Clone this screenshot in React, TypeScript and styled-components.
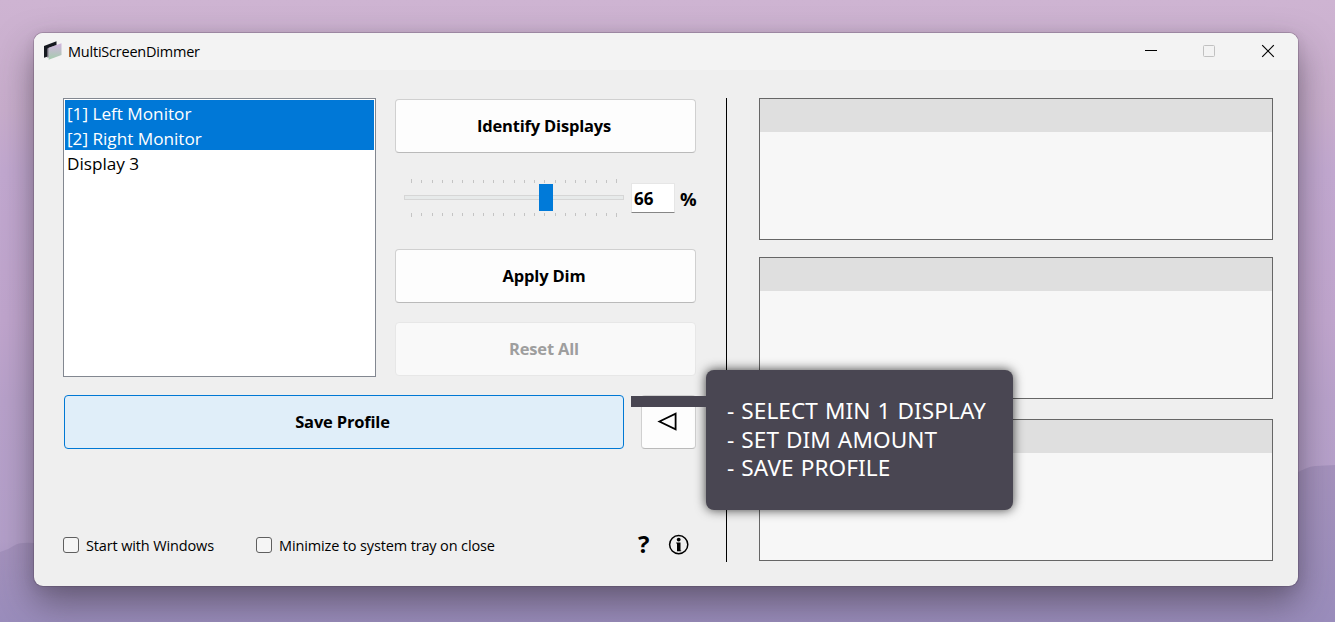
import React from "react";
import styled, { createGlobalStyle } from "styled-components";

const GlobalStyle = createGlobalStyle`
  * { box-sizing: border-box; }
  html, body { margin: 0; height: 100%; overflow: hidden; }
  body { font-family: "Open Sans", "Noto Sans", sans-serif; color: #000; }
  button, input { font-family: inherit; }
`;

const Desktop = styled.div`
  position: relative;
  width: 1335px;
  height: 622px;
  padding: 33px 37px 36px 34px;
  overflow: hidden;
  background: linear-gradient(180deg, #ceb4d2 0, #c9aecd 110px, #c3a9d1 170px, #c1a6ce 320px, #b9a2cb 400px, #b4a0ca 540px, #9b8cbb 622px);
`;

const Hills = styled.svg`
  position: absolute;
  left: 0;
  bottom: 0;
`;

const RightHill = styled(Hills)`
  left: 1275px;
`;

const Window = styled.main`
  position: relative;
  height: 553px;
  border-radius: 9px;
  background: #efefef;
  box-shadow: 0 0 0 1px rgba(70, 55, 75, 0.25), 0 17px 36px rgba(45, 40, 50, 0.5), 0 2px 12px rgba(50, 35, 60, 0.1);
`;

const TitleBar = styled.header`
  display: flex;
  align-items: center;
  height: 37px;
  padding: 0 23px 1px 9px;
  border-radius: 9px 9px 0 0;
  background: #f3f3f3;
`;

const Title = styled.h1`
  flex: 1;
  margin: 1px 0 0 6px;
  font-size: 14.5px;
  font-weight: 400;
  line-height: 20px;
  letter-spacing: -0.22px;
`;

const WindowControls = styled.div`
  display: flex;
  gap: 44px;
  svg { display: block; }
  svg:not(:last-child) { position: relative; left: -1px; }
`;

const Body = styled.div`
  display: grid;
  grid-template-columns: 633px 30px 1px 32px 514px;
  padding: 28px 0 0 29px;
`;

const Controls = styled.section`
  display: flex;
  flex-direction: column;
`;

const TopArea = styled.div`
  display: flex;
  gap: 19px;
  height: 279px;
`;

const DisplayList = styled.ul`
  width: 313px;
  margin: 0;
  padding: 1px;
  list-style: none;
  border: 1px solid #828790;
  background: #fff;
`;

const DisplayItem = styled.li<{ $selected?: boolean }>`
  height: 25px;
  padding-left: 2px;
  font-size: 17.2px;
  line-height: 27px;
  letter-spacing: -0.02px;
  color: ${(p) => (p.$selected ? "#fff" : "#000")};
  background: ${(p) => (p.$selected ? "#0078d7" : "transparent")};
`;

const Actions = styled.div`
  display: flex;
  flex-direction: column;
  width: 301px;
  padding-top: 1px;
`;

const Button = styled.button<{ $width?: number; $active?: boolean }>`
  display: flex;
  align-items: center;
  justify-content: center;
  flex: none;
  width: ${(p) => p.$width ?? 301}px;
  height: 54px;
  padding: 0 3px 1px 0;
  border: 1px solid ${(p) => (p.$active ? "#0078d4" : "#d0d0d0")};
  border-bottom-color: ${(p) => (p.$active ? "#0078d4" : "#bababa")};
  border-radius: 4px;
  background: ${(p) => (p.$active ? "#e0eef9" : "#fdfdfd")};
  color: #000;
  font-size: 16.5px;
  font-weight: 700;
  letter-spacing: -0.18px;
  &:disabled {
    border-color: #e7e7e7;
    background: #f9f9f9;
    color: #9e9e9e;
  }
`;

const DimRow = styled.div`
  display: flex;
  height: 96px;
  padding: 26px 0 0 9px;
`;

const Slider = styled.svg`
  display: block;
  flex: none;
`;

const Amount = styled.input`
  width: 44px;
  height: 30px;
  margin: 4px 0 0 7px;
  padding: 0 0 0 2px;
  border: 1px solid #e6e6e6;
  border-bottom-color: #868686;
  border-radius: 1px;
  background: #fff;
  font-size: 17px;
  font-weight: 700;
`;

const Percent = styled.span`
  margin: 8px 0 0 5px;
  font-size: 18.5px;
  font-weight: 700;
  line-height: 24px;
`;

const Spacer = styled.div`
  height: 19px;
`;

const SaveRow = styled.div`
  display: flex;
  gap: 17px;
  padding: 18px 0 0 1px;
`;

const Footer = styled.footer`
  display: flex;
  align-items: center;
  height: 24px;
  margin-top: 84px;
`;

const CheckLabel = styled.label<{ $width: number }>`
  display: flex;
  align-items: center;
  gap: 7px;
  width: ${(p) => p.$width}px;
  font-size: 14.5px;
  letter-spacing: -0.14px;
  white-space: nowrap;
`;

const CheckBox = styled.span`
  width: 16px;
  height: 16px;
  border: 1px solid #5f5f5f;
  border-radius: 3px;
  background: #f5f5f5;
`;

const Help = styled.span`
  width: 30px;
  margin: -2px 0 0 auto;
  font-size: 24px;
  font-weight: 700;
  line-height: 24px;
`;

const Divider = styled.div`
  grid-column: 3;
  height: 464px;
  background: #000;
`;

const Profiles = styled.section`
  grid-column: 5;
`;

const ProfileCard = styled.article<{ $gap: number }>`
  height: 142px;
  margin-bottom: ${(p) => p.$gap}px;
  border: 1px solid #666;
  background: #f7f7f7;
`;

const ProfileHeader = styled.div`
  height: 33px;
  background: #dfdfdf;
`;

const Callout = styled.aside`
  position: absolute;
  left: 672px;
  top: 337px;
  width: 307px;
  height: 140px;
  padding: 27px 0 0 21px;
  border-radius: 8px;
  background: #494652;
  box-shadow: 0 0 11px rgba(0, 0, 0, 0.75);
  color: #fff;
  font-family: "Noto Sans", "Open Sans", sans-serif;
  font-size: 22.6px;
  line-height: 28.5px;
  letter-spacing: 0.08px;
  word-spacing: 1px;
  white-space: nowrap;
`;

const Pointer = styled.div`
  position: absolute;
  left: 597px;
  top: 363px;
  width: 80px;
  height: 11px;
  background: #494652;
`;

const ticks = Array.from({ length: 21 }, (_, i) => Math.round(7 + i * 10.25));

export default function App() {
  return (
    <>
      <GlobalStyle />
      <Desktop>
        <Hills width="1335" height="82" viewBox="0 0 1335 82">
          <defs>
            <linearGradient id="hill" x1="0" y1="0" x2="0" y2="1">
              <stop offset="0" stopColor="#a592bd" />
              <stop offset="1" stopColor="#9a8dbc" />
            </linearGradient>
          </defs>
          <path d="M0 12 Q8 10 15 5 Q20 2 34 3 H1280 V82 H0Z" fill="url(#hill)" />
        </Hills>
        <RightHill width="60" height="160" viewBox="0 0 60 160">
          <path d="M0 30 Q22 6 40 4 L60 3 V160 H0Z" fill="url(#hill)" />
        </RightHill>
        <Window>
          <TitleBar>
            <svg width="19" height="20" viewBox="0 0 19 20">
              <defs>
                <linearGradient id="screen" x1="0" y1="0" x2="0" y2="1">
                  <stop offset="0.1" stopColor="#cdb6da" />
                  <stop offset="1" stopColor="#a6cdae" />
                </linearGradient>
              </defs>
              <path d="M1 4.9 L13.5 0.2 V12.7 L1 16.7Z" fill="#15191f" />
              <path d="M4.3 7.5 L14 3.7 V14.2 L4.3 16.7Z" fill="#8c8694" />
              <path d="M5.6 6.7 L18.5 2.3 V13.9 L5.6 18.7Z" fill="url(#screen)" />
            </svg>
            <Title>MultiScreenDimmer</Title>
            <WindowControls>
              <svg width="14" height="14" viewBox="0 0 14 14"><path d="M1 6.5H13" stroke="#000" /></svg>
              <svg width="14" height="14" viewBox="0 0 14 14"><rect x="1.5" y="1.5" width="11" height="11" rx="1" fill="none" stroke="#c1c1c1" /></svg>
              <svg width="14" height="14" viewBox="0 0 14 14"><path d="M1.2 1.2L12.8 12.8M12.8 1.2L1.2 12.8" stroke="#000" strokeWidth="1.2" /></svg>
            </WindowControls>
          </TitleBar>
          <Body>
            <Controls>
              <TopArea>
                <DisplayList>
                  <DisplayItem $selected>[1] Left Monitor</DisplayItem>
                  <DisplayItem $selected>[2] Right Monitor</DisplayItem>
                  <DisplayItem>Display 3</DisplayItem>
                </DisplayList>
                <Actions>
                  <Button>Identify Displays</Button>
                  <DimRow>
                    <Slider width="220" height="38" viewBox="0 0 220 38" shapeRendering="crispEdges">
                      {ticks.map((x, i) => {
                        const end = i === 0 || i === 20 ? 1 : 0;
                        return (
                          <g key={x} fill="#c4c4c4">
                            <rect x={x} y={1 - end} width="1" height={3 + end} />
                            <rect x={x} y="34" width="1" height={3 + end} />
                          </g>
                        );
                      })}
                      <rect x="0.5" y="16.5" width="219" height="4" fill="#e7eaea" stroke="#d6d6d6" />
                      <rect x="135" y="5" width="14" height="27" fill="#007ad9" />
                    </Slider>
                    <Amount defaultValue="66" />
                    <Percent>%</Percent>
                  </DimRow>
                  <Button>Apply Dim</Button>
                  <Spacer />
                  <Button disabled>Reset All</Button>
                </Actions>
              </TopArea>
              <SaveRow>
                <Button $width={560} $active>Save Profile</Button>
                <Button $width={55}>
                  <svg width="20" height="19" viewBox="0 0 20 19">
                    <path d="M2.4 9.5L18.6 1.6V17.4Z" fill="none" stroke="#000" strokeWidth="1.8" />
                  </svg>
                </Button>
              </SaveRow>
              <Footer>
                <CheckLabel $width={193}><CheckBox />Start with Windows</CheckLabel>
                <CheckLabel $width={260}><CheckBox />Minimize to system tray on close</CheckLabel>
                <Help>?</Help>
                <svg width="28" height="22" viewBox="0 0 28 22">
                  <circle cx="10.7" cy="10.6" r="9.1" fill="none" stroke="#000" strokeWidth="1.5" />
                  <circle cx="10.7" cy="5.6" r="1.9" />
                  <path d="M8.2 8.6H12.5V16.4H13.2V17.2H9V9.6H8.2Z" />
                </svg>
              </Footer>
            </Controls>
            <Divider />
            <Profiles>
              {[17, 20, 0].map((gap, i) => (
                <ProfileCard key={i} $gap={gap}><ProfileHeader /></ProfileCard>
              ))}
            </Profiles>
          </Body>
          <Callout>
            - SELECT MIN 1 DISPLAY<br />- SET DIM AMOUNT<br />- SAVE PROFILE
          </Callout>
          <Pointer />
        </Window>
      </Desktop>
    </>
  );
}
